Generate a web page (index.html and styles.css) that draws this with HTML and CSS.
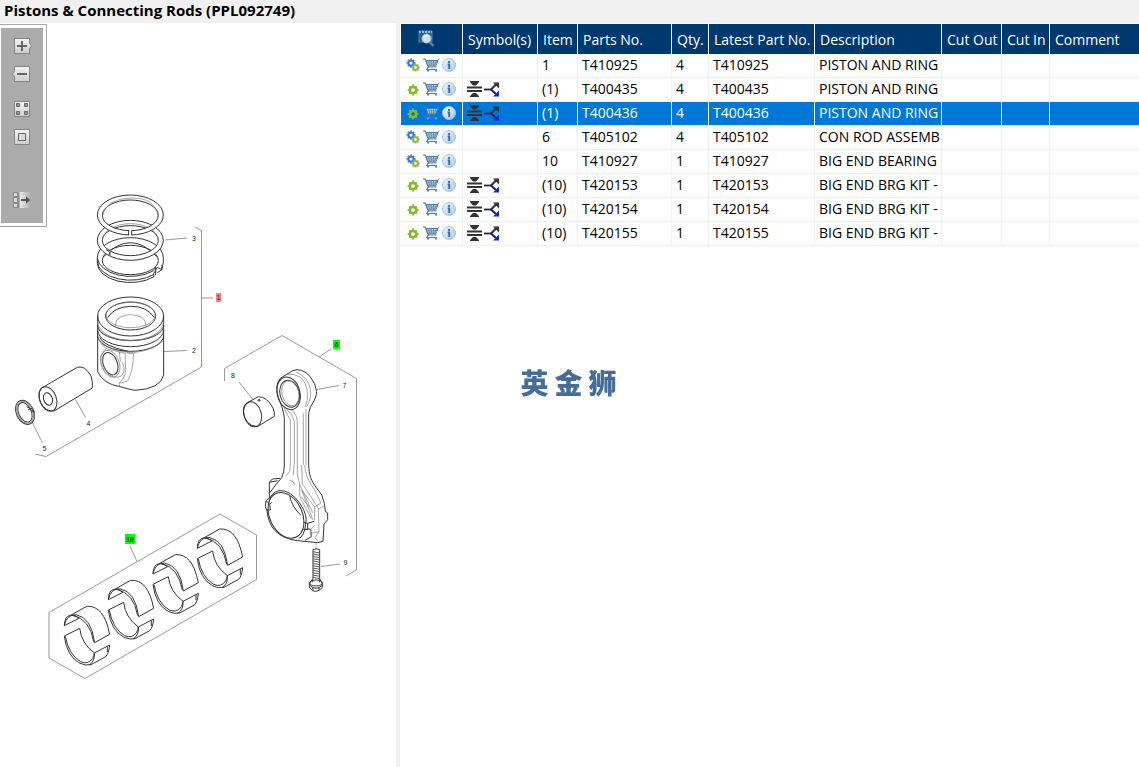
FILE: index.html
```html
<!DOCTYPE html>
<html lang="en">
<head>
<meta charset="utf-8">
<title>Pistons &amp; Connecting Rods</title>
<link rel="stylesheet" href="styles.css">
</head>
<body>
<svg class="defs" aria-hidden="true">
  <defs>
    <linearGradient id="face" x1="0" y1="0" x2="0" y2="1"><stop offset="0" stop-color="#f4f4f4"/><stop offset="1" stop-color="#cdcdcd"/></linearGradient>
    <linearGradient id="fade"><stop offset="0" stop-color="#f0f0f0"/><stop offset="1" stop-color="#ababab"/></linearGradient>
    <linearGradient id="glass" x1="0" y1="0" x2="1" y2="1"><stop offset="0" stop-color="#f4f9fd"/><stop offset="1" stop-color="#a3c6e3"/></linearGradient>
    <symbol id="cog" viewBox="0 0 12 12">
      <circle cx="6" cy="6" r="3.1" fill="none" stroke="currentColor" stroke-width="2.5"/>
      <path d="M6 .6v2M6 9.4v2M.6 6h2M9.4 6h2M2.2 2.2l1.3 1.3M8.5 8.5l1.3 1.3M9.8 2.2 8.5 3.5M3.5 8.5 2.2 9.8" stroke="currentColor" stroke-width="2"/>
    </symbol>
    <symbol id="part" viewBox="0 0 14 16"><use href="#cog" x="1" y="3" width="12" height="12" color="#86b832"/></symbol>
    <symbol id="assembly" viewBox="0 0 14 16">
      <use href="#cog" x="0" y="1" width="10" height="10" color="#3f78d4"/>
      <use href="#cog" x="5" y="6" width="9" height="9" color="#86b832"/>
    </symbol>
    <symbol id="cart" viewBox="0 0 18 16">
      <path d="M1 2h2.300l2.900 8h8.300M6.200 10l-1.200 2.500h10" fill="none" stroke="#4b779f" stroke-width="1.200"/>
      <path d="M4 3.500h12l-2.200 5.300H6z" fill="#d6e4f0" stroke="#4b7ba6"/>
      <path d="M6.500 3.500 8 8.800M9 3.500l.8 5.300M11.500 3.500v5.300M14 3.500l-1.500 5.300M5 5.200h10.700M5.500 7h9.300" stroke="#5585b0" stroke-width=".8"/>
      <path d="M15.500 4 17 1.500" stroke="#4b779f"/>
      <circle cx="6" cy="13.500" r="1.200" fill="#4a9bd0"/><circle cx="14" cy="13.500" r="1.200" fill="#4a9bd0"/>
    </symbol>
    <symbol id="info" viewBox="0 0 14 16">
      <circle cx="7" cy="8" r="6.500" fill="url(#glass)" stroke="#a5c3dc"/>
      <path d="M7 4v2M5.600 7.400h1.600V12" fill="none" stroke="#346ca2" stroke-width="1.800"/>
    </symbol>
    <symbol id="notfor" viewBox="0 0 16 16">
      <path d="M0 5.500h15v2H0zM0 9h15v2H0zM3 0h9v1L9 4.500H6L3 1zM6 12h3l3 3v1H3v-1z" fill="#333"/>
    </symbol>
    <symbol id="split" viewBox="0 0 16 16">
      <path d="M0 8.500h8" stroke="#172568" stroke-width="1.800"/>
      <path d="m7 8.500 5-5" stroke="#333" stroke-width="2.200"/>
      <path d="m7 8.500 5 4.500" stroke="#172568" stroke-width="2.200"/>
      <path d="M9 1.500h6v6l-2-2-2-2z" fill="#333"/><path d="M15 9.500v6H9l3-3z" fill="#1024dd"/>
    </symbol>
    <!-- One pair of big end bearing shells, drawn at three units to the pixel -->
    <symbol id="shells" overflow="visible">
      <path d="M73 362Q74 332 92 331L140 304Q192 300 209 388L164 413Q155 338 108 329Q79 329 73 362L117 340Q107 329 92 331M98 331Q150 343 161 410"/>
      <path d="M73 393 119 370Q124 415 163 444L209 420Q207 445 197 455L153 479Q138 483 120 475Q80 454 73 393M76 394Q86 449 122 470Q145 480 158 460Q162 452 163 444M163 444Q166 468 147 480M202 424V441"/>
    </symbol>
  </defs>
</svg>

<header class="title"><h1>Pistons &amp; Connecting Rods (PPL092749)</h1></header>
<main class="panes">
  <section class="drawing" aria-label="Drawing">
    <svg class="diagram" viewBox="0 23 396 744" role="img" aria-label="Exploded view of piston and connecting rod">
      <g class="leader">
        <path d="M195 227l6.500 4V367L46 456.500 35 454M201.500 298H213M165 240l22-2M164 351.500l23-1M75.500 399.500l10 18M32.500 423l10 20"/>
        <path d="M224.500 381V368.500L282 335.500 356.500 378.500V570L346 576M319 357l12-8M317 389.500l22-4M239 382l13.500 17M321 566.500l19-2.500"/>
        <path d="M49 612.500 220 514 256.500 535V579.500L85 678.500 49 658zM130 546l7 15.500"/>
      </g>
      <g class="ink" transform="translate(80 185) scale(.3333)">
        <path class="solid" d="M52 218V235A99 58 0 0 0 222 275L221 266 232 247 245 254 250 232V218A99 60 0 0 0 52 218zM67 227A84 42 0 0 0 235 227A84 46 0 0 0 67 227z"/>
        <path d="M52 218A99 59 0 0 0 219 258L225 250M52 229A99 58 0 0 0 222 268M232 263 246 254V240M227 246V270M70 216Q151 130 232 216"/>
        <path class="solid" d="M151 106A99 60 0 0 1 151 226A99 60 0 0 1 151 106M151 122A84 44 0 0 0 67 166A84 46 0 0 0 235 166A84 44 0 0 0 151 122"/>
        <path class="fine" d="M67 166A84 50 0 0 1 235 166M82 190 94 198M92 199V213"/>
        <path d="M78 194 90 202 87 210"/>
        <path class="solid" d="M151 30A99 60 0 0 1 151 150A99 60 0 0 1 151 30M151 45A84 46 0 0 0 67 91A84 46 0 0 0 235 91A84 46 0 0 0 151 45"/>
        <path class="fine" d="M67 94Q78 42 151 39T235 94"/>
        <path class="solid" stroke="none" d="M147 133h8v21h-8z"/><path d="M146 137v14M155 137v14"/>
      </g>
      <g class="ink" transform="translate(0 290) scale(.3333)">
        <path class="solid" d="M293 78A99 57 0 0 1 491 78V255Q482 297 405 301Q383 297 360 290 310 282 293 245z"/>
        <path d="M293 78A99 60 0 0 0 491 78M293 107A99 45 0 0 0 491 107M293 120A99 50 0 0 0 491 120M293 137A99 47 0 0 0 491 137"/>
        <path class="fine" d="M293 93A99 59 0 0 0 491 93M295 112A98 45 0 0 0 489 112M299 152Q338 188 401 188 464 180 491 151"/>
        <ellipse cx="392" cy="78" rx="75" ry="42"/><ellipse class="fine" cx="392" cy="75" rx="74" ry="38"/>
        <path d="M323 83Q343 50 392 49T463 83"/>
        <path class="fine" d="M347 110V100A45 26 0 0 1 437 100V110"/>
        <path d="M299 142Q307 166 383 184"/>
        <ellipse cx="331" cy="221" rx="21" ry="35" transform="rotate(-20 331 221)"/>
        <ellipse class="fine" cx="331" cy="221" rx="27" ry="42" transform="rotate(-20 331 221)"/>
        <path class="fine" d="M302 161 319 176 303 196Q298 220 315 245 341 271 366 257 381 231 361 211L358 186 376 190 376 220Q383 258 357 280M319 176 358 186M401 190Q399 245 383 273L358 280V290M383 181v9h18"/>
        <path class="solid" d="M125 294 232 232Q255 225 273 258 279 277 277 294L162 363Q138 366 122 338 110 309 125 294"/>
        <ellipse cx="144" cy="327" rx="25" ry="38" transform="rotate(-20 144 327)"/>
        <ellipse cx="144" cy="327" rx="13" ry="19" transform="rotate(-20 144 327)"/>
        <ellipse cx="75" cy="367" rx="26" ry="38" transform="rotate(-25 75 367)"/>
        <ellipse cx="75" cy="367" rx="19" ry="31" transform="rotate(-25 75 367)"/>
        <ellipse class="fine" cx="75" cy="367" rx="23" ry="35" transform="rotate(-25 75 367)"/>
        <path d="M80 350l11 6M84 360l13-6M92 363l12 1M98 358l5 12"/>
      </g>
      <g class="ink" transform="translate(215 325) scale(.3333)">
        <path class="solid" d="M97 233 130 215Q156 215 174 249 179 260 178 274L127 305Q90 302 85 260 84 241 97 233"/>
        <ellipse cx="113" cy="268" rx="26" ry="38" transform="rotate(-15 113 268)"/><ellipse cx="132" cy="226" rx="4" ry="2"/>
        <path d="M208 420V280Q206 255 190 217 178 181 196 160L233 137Q260 126 286 155 302 175 305 200 306 215 286 247L281 265V420"/>
        <ellipse cx="221" cy="205" rx="34" ry="50" transform="rotate(-14 221 205)"/>
        <ellipse cx="224" cy="206" rx="29" ry="41" transform="rotate(-14 224 206)"/>
        <ellipse class="fine" cx="226" cy="205" rx="25" ry="38" transform="rotate(-14 226 205)"/>
        <path class="fine" d="M214 148Q268 142 277 198 281 225 270 246M243 141Q280 157 286 192 291 219 275 245M207 248Q220 276 226 284V420M215 253Q234 269 238 289V420M229 254Q249 270 247 300V420M265 265V420M273 252V420"/>
      </g>
      <g class="ink" transform="translate(250 450) scale(.3333)">
        <path d="M103 45Q103 67 95 83L77 105M176 45Q176 85 199 113 220 134 223 160L226 184 233 189V209L222 222 219 274 203 278 143 272Q101 268 75 242 54 219 51 181L46 170 48 152 58 144 58 97 67 87 91 85M58 97 83 92M77 105 58 130"/>
        <ellipse cx="108" cy="196" rx="49" ry="72" transform="rotate(-25 108 196)"/>
        <path d="M58 149Q66 126 87 122 122 119 151 162 174 196 167 223 163 259 146 266M49 153 59 163 61 180 49 180M59 163 65 157M160 217 173 220V239L160 238M173 220 193 214M170 236 182 238 184 260 165 271M119 138Q126 171 153 196"/>
        <path class="fine" d="M121 45 119 65 107 78M132 45 130 75M142 45V71L149 103 188 188M155 45 157 100 205 175 207 245 182 250M164 45Q166 82 190 113L213 159 194 171 158 124M119 91l10 4 5 10M149 103V135L177 170M194 171V211M207 176 221 169M207 245 195 263 207 275M155 120 189 211M149 140 184 206M182 239 194 226"/>
        <path class="fine" d="M198 280v7M198 290v7"/>
        <path d="M189 299V385L178 401V411L187 422Q197 427 208 421L217 412V400L209 386V299Q198 294 189 299"/>
        <path class="thread" d="M189 305l20 4M189 312l20 4M189 319l20 4M189 326l20 4M189 333l20 4M189 340l20 4M189 347l20 4M189 354l20 4M189 361l20 4M189 368l20 4M189 375l20 4M189 382l20 4"/>
        <ellipse cx="198" cy="399" rx="19" ry="9"/><path d="M179 406Q198 424 217 406M188 397V388M209 397V387M187 412l3 9M207 412v9"/>
      </g>
      <g class="ink" transform="translate(40 505) scale(.3333)">
        <use href="#shells"/><use href="#shells" x="132" y="-78"/><use href="#shells" x="266" y="-155"/><use href="#shells" x="399" y="-232"/>
      </g>
      <path class="hot" d="M216 293h5v9h-5z"/>
      <path class="tag" d="M333 340h7v9h-7zM125 534h10v10h-10z"/>
      <g class="callouts">
        <text x="218.500" y="300">1</text><text x="194" y="352.500">2</text><text x="194" y="240.500">3</text>
        <text x="88.500" y="425.500">4</text><text x="44.500" y="450.500">5</text><text class="tagged" x="336.500" y="347">6</text>
        <text x="344.500" y="387.500">7</text><text x="233" y="377.500">8</text><text x="345.500" y="565">9</text><text class="tagged" x="130" y="541.500">10</text>
      </g>
    </svg>
    <div class="toolbox">
      <div class="tools">
        <button type="button" aria-label="Zoom in"><svg viewBox="0 0 20 16"><path d="M2.500.5h15v5l2 2.500-2 2.500v5h-15z" fill="url(#face)" stroke="#858585"/><path d="M5 8h10M10 3v10" stroke="#666" stroke-width="2"/></svg></button>
        <button type="button" aria-label="Zoom out"><svg viewBox="0 0 20 16"><path d="M2.500.5h15v15h-15v-5L.5 8l2-2.500z" fill="url(#face)" stroke="#858585"/><path d="M5 8h10" stroke="#666" stroke-width="2"/></svg></button>
        <button type="button" class="group-start" aria-label="Tiles"><svg viewBox="0 0 20 16"><path d="M2.500.5h15v15h-15z" fill="url(#face)" stroke="#858585"/><path d="M4.500 2.500h3v3h-3zM12.500 2.500h3v3h-3zM4.500 10.500h3v3h-3zM12.500 10.500h3v3h-3z" fill="#999" stroke="#666"/></svg></button>
        <button type="button" aria-label="Fit"><svg viewBox="0 0 20 16"><path d="M2.500.5h15v15h-15z" fill="url(#face)" stroke="#858585"/><path d="M6.500 4.500h7v7h-7z" fill="#ddd" stroke="#666"/></svg></button>
        <button type="button" class="last" aria-label="Hide panel"><svg viewBox="0 0 20 16"><path d="M7 0h12v16H7z" fill="url(#fade)"/><path d="M1.500.5h4v4h-4zM1.500 5.500h4v5h-4zM1.500 11.500h4v4h-4z" fill="#ddd" stroke="#858585"/><path d="M7 .5V16" stroke="#777"/><path d="M9 8h7" stroke="#555" stroke-width="2"/><path d="m14 4.500 4.500 3.500-4.500 3.500z" fill="#555"/></svg></button>
      </div>
    </div>
  </section>

  <section class="list" aria-label="Parts list">
    <table class="parts">
      <colgroup><col class="c-act"><col class="c-sym"><col class="c-item"><col class="c-part"><col class="c-qty"><col class="c-latest"><col class="c-desc"><col class="c-out"><col class="c-in"><col></colgroup>
      <thead><tr>
        <th class="search"><button type="button" aria-label="Search parts"><svg class="find" viewBox="0 0 18 18"><path d="M1 1h13v11H1z" fill="#255d87" stroke="#4d8bb0"/><path d="M1 2h13" stroke="#8ab9d2" stroke-width="2" stroke-dasharray="2 1"/><path d="m11.500 12 4 4" stroke="#3c82b8" stroke-width="2.500"/><circle cx="8.500" cy="8.500" r="4.500" fill="#d5dfe7" stroke="#a9bfd0"/><path d="M6 8q0-3 3-3" fill="none" stroke="#fff"/></svg></button></th>
        <th>Symbol(s)</th><th>Item</th><th>Parts No.</th><th>Qty.</th><th>Latest Part No.</th><th>Description</th><th>Cut Out</th><th>Cut In</th><th>Comment</th>
      </tr></thead>
      <tbody id="rows"></tbody>
    </table>
  </section>
</main>
<div class="mark" lang="zh-CN"><span>英</span><span>金</span><span>狮</span></div>
<script src="parts.js"></script>
</body>
</html>
```

FILE: styles.css
```css
* { box-sizing: border-box; }
body {
  margin: 0;
  min-height: 100vh;
  display: flex;
  flex-direction: column;
  background: #fff;
  color: #000;
  font: 14px/21px "Open Sans", "Noto Sans", sans-serif;
}
button { margin: 0; padding: 0; border: 0; background: none; display: block; }
svg { display: block; }
.defs { position: absolute; width: 0; height: 0; }

.title { background: #f0f0f0; padding: 0 4px 2px; }
.title h1 { margin: 0; font-size: 15px; line-height: 21px; font-weight: 700; }

.panes { flex: 1; display: grid; grid-template-columns: 400px minmax(0, 1fr); }
.drawing { position: relative; border-right: 4px solid #f0f0f0; }
.diagram { width: 100%; height: auto; }
.ink { fill: none; stroke: #333; stroke-width: 3; stroke-linejoin: round; }
.ink .solid { fill: #fff; fill-rule: evenodd; }
.ink .fine { stroke: #777; stroke-width: 2; }
.ink .thread { stroke: #555; }
.leader { fill: none; stroke: #999; stroke-width: 1; }
.hot { fill: #ff8080; }
.tag { fill: #00ff00; }
.callouts { font: 7px "Liberation Sans", Arial, sans-serif; text-anchor: middle; fill: #222; }
.callouts .tagged { font-weight: 700; fill: #030; }

.toolbox {
  position: absolute;
  top: 1px;
  left: 0;
  padding: 3px 3px 3px 1px;
  border: 1px solid #a6a6a6;
  border-left: 0;
  background: #fff;
}
.tools {
  display: flex;
  flex-direction: column;
  gap: 12px;
  padding: 10px 11px 15px;
  background: #ababab;
}
.tools svg { width: 20px; height: 16px; }
.tools .group-start { margin-top: 7px; }
.tools .last { margin-top: 35px; }

.list { padding: 1px 0 0 1px; overflow: hidden; }
.parts { width: 100%; table-layout: fixed; border-collapse: separate; border-spacing: 0; }
.c-act { width: 62px; }
.c-sym { width: 75px; }
.c-item { width: 40px; }
.c-part { width: 94px; }
.c-qty { width: 37px; }
.c-latest { width: 106px; }
.c-desc { width: 127px; }
.c-out { width: 60px; }
.c-in { width: 48px; }
.parts th, .parts td {
  text-align: left;
  font-weight: 400;
  white-space: nowrap;
  overflow: hidden;
  border-right: 1px solid #f0f0f0;
}
.parts th:last-child, .parts td:last-child { border-right: 0; }
.parts th { height: 30px; padding: 0 0 0 5px; background: #003870; color: #fff; }
.parts td { height: 24px; padding: 0 0 2px 4px; border-bottom: 1px solid #f0f0f0; }
.parts tr.selected td { background: #0078d7; color: #fff; }
.parts .search { padding: 0 0 0 17px; }
.find { width: 18px; height: 18px; }
.actions { display: flex; gap: 2px; padding-left: 1px; }
.actions svg { height: 16px; }
.narrow { width: 14px; }
.wide { width: 18px; }
.symbols { display: flex; gap: 1px; }
.symbols svg { width: 16px; height: 16px; }

.mark {
  position: fixed;
  inset: 0 2px 4px 0;
  display: flex;
  align-items: center;
  justify-content: center;
  gap: 6px;
  pointer-events: none;
  color: #456d9b;
  font: 900 28px/28px "Noto Sans CJK SC", sans-serif;
}
```

FILE: parts.js
```js
const parts = [
  { item: "1", no: "T410925", qty: 4, desc: "PISTON AND RING", assembly: true },
  { item: "(1)", no: "T400435", qty: 4, desc: "PISTON AND RING" },
  { item: "(1)", no: "T400436", qty: 4, desc: "PISTON AND RING", selected: true },
  { item: "6", no: "T405102", qty: 4, desc: "CON ROD ASSEMB", assembly: true },
  { item: "10", no: "T410927", qty: 1, desc: "BIG END BEARING", assembly: true },
  { item: "(10)", no: "T420153", qty: 1, desc: "BIG END BRG KIT -" },
  { item: "(10)", no: "T420154", qty: 1, desc: "BIG END BRG KIT -" },
  { item: "(10)", no: "T420155", qty: 1, desc: "BIG END BRG KIT -" },
];

const icon = (id, cls) => `<svg class="${cls}" aria-hidden="true"><use href="#${id}"/></svg>`;
const button = (id, cls, label) => `<button type="button" aria-label="${label}">${icon(id, cls)}</button>`;

document.getElementById("rows").innerHTML = parts.map((p) => `
  <tr class="${p.selected ? "selected" : ""}">
    <td><div class="actions">${button(p.assembly ? "assembly" : "part", "narrow", "Part type")}${button("cart", "wide", "Add to cart")}${button("info", "narrow", "Information")}</div></td>
    <td>${p.assembly ? "" : `<div class="symbols">${icon("notfor", "")}${icon("split", "")}</div>`}</td>
    <td>${p.item}</td><td>${p.no}</td><td>${p.qty}</td><td>${p.no}</td><td>${p.desc}</td>
    <td></td><td></td><td></td>
  </tr>`).join("");
```
